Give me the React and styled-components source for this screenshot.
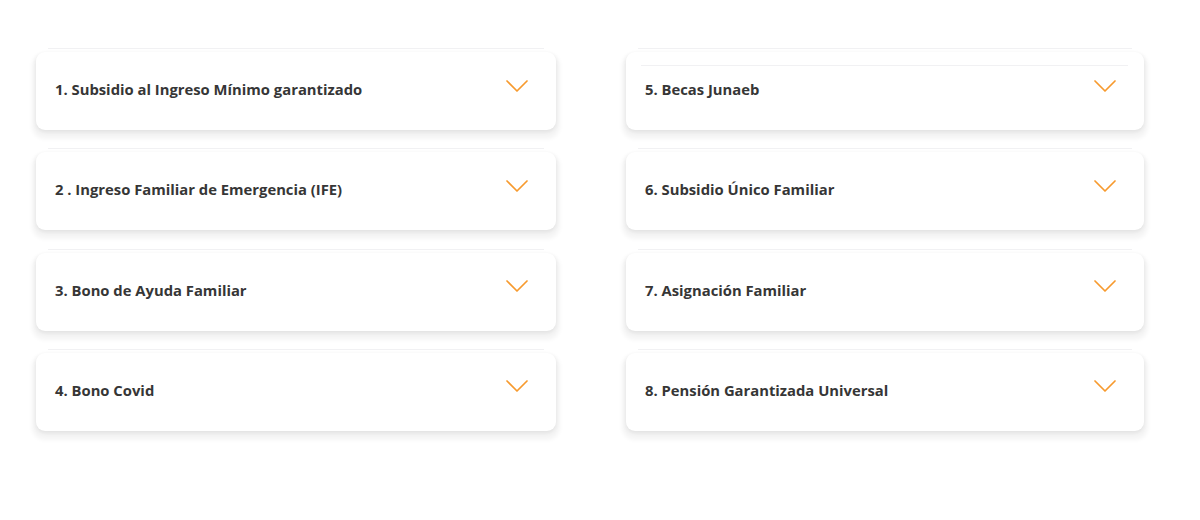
import React from "react";
import styled, { createGlobalStyle } from "styled-components";

const Global = createGlobalStyle`
  html, body { margin: 0; padding: 0; background: #ffffff; }
  body { font-family: "Open Sans", "Noto Sans", sans-serif; }
`;

const Page = styled.div`
  width: 1200px;
  height: 520px;
  box-sizing: border-box;
  padding: 48px 56px 0 36px;
  display: grid;
  grid-template-columns: 520px 518px;
  column-gap: 70px;
  align-content: start;
`;

const Column = styled.div`
  display: flex;
  flex-direction: column;
  gap: 18.33px;
`;

const Item = styled.div`
  display: flex;
  flex-direction: column;
  gap: 3px;
`;

const Divider = styled.div`
  height: 1px;
  margin: 0 12px;
  background: #f1f1f3;
`;

const Card = styled.div`
  height: 78px;
  box-sizing: border-box;
  background: #fff;
  border-radius: 9px;
  box-shadow: 0 2px 4px rgba(0, 0, 0, 0.08), 0 5px 4px 4px rgba(0, 0, 0, 0.045);
  display: flex;
  flex-direction: column;
  padding: 0 28px 0 19px;
`;

const InnerLine = styled.div`
  height: 1px;
  margin: 13px -12px 0 -4px;
  background: #f1f1f3;
`;

const Row = styled.div`
  flex: 1;
  display: flex;
  align-items: center;
  justify-content: space-between;
  margin-top: ${(p) => (p.$shift ? "-18px" : "-4px")};
`;

const Title = styled.span`
  font-size: 14.8px;
  font-weight: 700;
  color: #363636;
`;

const Chevron = styled.svg`
  width: 22px;
  height: 12px;
  margin-top: -7px;
  flex: none;
`;

const Arrow = () => (
  <Chevron viewBox="0 0 22 12">
    <path d="M1 1 L11 11 L21 1" fill="none" stroke="#f79a2e" strokeWidth="1.7" strokeLinecap="round" strokeLinejoin="round" />
  </Chevron>
);

const left = [
  "1. Subsidio al Ingreso Mínimo garantizado",
  "2 . Ingreso Familiar de Emergencia (IFE)",
  "3. Bono de Ayuda Familiar",
  "4. Bono Covid",
];
const right = [
  "5. Becas Junaeb",
  "6. Subsidio Único Familiar",
  "7. Asignación Familiar",
  "8. Pensión Garantizada Universal",
];

const Accordion = ({ title, inner }) => (
  <Item>
    <Divider />
    <Card>
      {inner && <InnerLine />}
      <Row $shift={inner}>
        <Title>{title}</Title>
        <Arrow />
      </Row>
    </Card>
  </Item>
);

export default function App() {
  return (
    <>
      <Global />
      <Page>
        <Column>
          {left.map((t) => (
            <Accordion key={t} title={t} />
          ))}
        </Column>
        <Column>
          {right.map((t, i) => (
            <Accordion key={t} title={t} inner={i === 0} />
          ))}
        </Column>
      </Page>
    </>
  );
}
